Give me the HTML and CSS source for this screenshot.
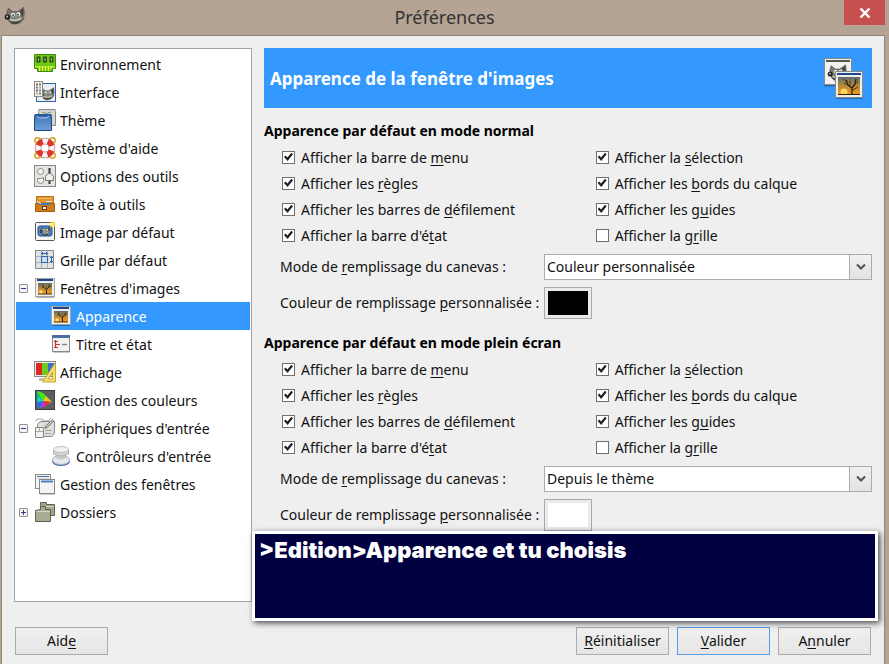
FILE: index.html
```html
<!DOCTYPE html>
<html lang="fr">
<head>
  <meta charset="UTF-8">
  <meta name="viewport" content="width=device-width, initial-scale=1.0">
  <title>Préférences</title>
  <link rel="stylesheet" href="styles.css">
</head>
<body>
  <svg class="defs" aria-hidden="true">
    <defs>
      <linearGradient id="sunset" x1="0" y1="0" x2="0" y2="1">
        <stop offset="0" stop-color="#5c6b70"/>
        <stop offset="0.5" stop-color="#b98a3c"/>
        <stop offset="1" stop-color="#f39a1c"/>
      </linearGradient>
      <linearGradient id="fur" x1="0" y1="0" x2="0" y2="1">
        <stop offset="0" stop-color="#66665f"/>
        <stop offset="0.6" stop-color="#8a8a83"/>
        <stop offset="1" stop-color="#3a3a35"/>
      </linearGradient>
      <linearGradient id="theme-blue" x1="0" y1="0" x2="0" y2="1">
        <stop offset="0" stop-color="#3f76b8"/>
        <stop offset="1" stop-color="#6f9fd4"/>
      </linearGradient>
    </defs>
    <symbol id="wilber" viewBox="0 0 22 20">
      <path d="M3 7 L4.500 2 L9 5.500 H14 L20.500 1 Q22 7 20.500 13 Q17 18.500 11 18.500 Q6 18.500 4 13 Z" fill="url(#fur)" stroke="#3a3a36" stroke-width="0.600"/>
      <path d="M17 5 L20 2.500 Q21 8 19 12 Z" fill="#45453f"/>
      <ellipse cx="9.500" cy="8.500" rx="2" ry="2" fill="#f4f4f0"/>
      <ellipse cx="15" cy="8" rx="2" ry="2" fill="#f4f4f0"/>
      <circle cx="9.500" cy="9" r="0.900" fill="#111"/>
      <circle cx="14.700" cy="8.500" r="0.900" fill="#111"/>
      <circle cx="3.500" cy="11" r="2.800" fill="#1d1d1b"/>
      <circle cx="3.300" cy="10.700" r="1.100" fill="#b5b5b0"/>
      <path d="M6 13.500 Q12 16 18 12.500" fill="none" stroke="#c9c9c2" stroke-width="1.800"/>
    </symbol>
    <symbol id="photo" viewBox="0 0 22 22">
      <path d="M2 20 H20 V21 H3 Z" fill="#000" opacity="0.3"/>
      <rect x="1.500" y="1.500" width="19" height="18" fill="#eeeeec" stroke="#a3a5a0"/>
      <rect x="3" y="2" width="16" height="2" fill="#204a87"/>
      <rect x="4" y="6" width="14" height="11" fill="url(#sunset)"/>
      <circle cx="7" cy="15" r="1.800" fill="#ffe47a"/>
      <path d="M4 17 H18" stroke="#4a3208"/>
      <path d="M12.500 17 V12 M12.500 13 L9.500 10 L8.500 7.500 M12.500 12.500 L15 10 L15.500 7.500" fill="none" stroke="#3a2408" stroke-width="1"/>
      <path d="M15 10 L17 9 M10 10.500 L7.500 10 M13 12 L12.500 9" fill="none" stroke="#3a2408" stroke-width="0.600"/>
    </symbol>
  </svg>

  <header class="titlebar">
    <svg class="app-icon" viewBox="0 0 22 20"><use href="#wilber"/></svg>
    <h1>Préférences</h1>
    <button class="close" type="button" aria-label="Fermer">
      <svg viewBox="0 0 12 10"><path d="M1.500 0.500 L10.500 9.500 M10.500 0.500 L1.500 9.500" stroke="#fff" stroke-width="2.400"/></svg>
    </button>
  </header>

  <form class="dialog">
    <div class="main">
      <nav class="tree" aria-label="Catégories">
        <ul>
          <li><a href="#environnement">
            <svg class="icon" viewBox="0 0 22 22">
              <path d="M0.500 1.500 H21.500 V15.500 H18.500 V18.500 H3.500 V15.500 H0.500 Z" fill="#6cc914" stroke="#3f8a05"/>
              <path d="M1 14 H21" stroke="#9be02a" stroke-width="2"/>
              <path d="M2.500 3.500 h4 v6 h-4 Z M9 3.500 h4 v6 h-4 Z M15.500 3.500 h4 v6 h-4 Z" fill="#2c4a1a"/>
              <path d="M4.500 5 v3 M11 5 v3 M17.500 5 v3" stroke="#a9c59a"/>
              <path d="M5.500 13 v5 M8.500 13 v5 M11.500 13 v5 M14.500 13 v5 M17 13 v3" stroke="#eef04a" stroke-width="1.200"/>
            </svg>
            <span>Environnement</span></a></li>
          <li><a href="#interface">
            <svg class="icon" viewBox="0 0 22 22">
              <rect x="2.500" y="2.500" width="19" height="18" fill="#e9eef4" stroke="#3465a4"/>
              <use href="#wilber" x="5" y="6" width="16" height="14"/>
              <rect x="0.500" y="0.500" width="8" height="15" fill="#f3f3f1" stroke="#888a85"/>
              <path d="M2 3.500 h2 M2 9.500 h2" stroke="#a05a5a" stroke-width="2"/>
              <path d="M5 3.500 h2 M5 12.500 h2" stroke="#5b8f5b" stroke-width="2"/>
              <path d="M2 6.500 h2 M5 9.500 h2" stroke="#6c7fae" stroke-width="2"/>
              <path d="M5 6.500 h2 M2 12.500 h2" stroke="#d09b52" stroke-width="2"/>
            </svg>
            <span>Interface</span></a></li>
          <li><a href="#theme">
            <svg class="icon" viewBox="0 0 22 22">
              <path d="M4.500 2.500 L5 0.500 H21 L21.500 2.500 V16.500 H4.500 Z" fill="#d3d7cf" stroke="#888a85"/>
              <path d="M8 3 q4 3 9 0" fill="none" stroke="#888a85"/>
              <path d="M0.500 7.500 L1 5.500 H17 L17.500 7.500 V21.500 H0.500 Z" fill="url(#theme-blue)" stroke="#204a87"/>
              <path d="M1 6.500 H17" stroke="#2d5c9c" stroke-width="2"/>
              <path d="M3 7 l2 2 h8 l2 -2" fill="none" stroke="#a9c6ea"/>
            </svg>
            <span>Thème</span></a></li>
          <li><a href="#aide">
            <svg class="icon" viewBox="0 0 22 22">
              <circle cx="3.500" cy="3.500" r="2.700" fill="none" stroke="#d9a520" stroke-width="1.500"/>
              <circle cx="18.500" cy="3.500" r="2.700" fill="none" stroke="#d9a520" stroke-width="1.500"/>
              <circle cx="3.500" cy="18.500" r="2.700" fill="none" stroke="#d9a520" stroke-width="1.500"/>
              <circle cx="18.500" cy="18.500" r="2.700" fill="none" stroke="#d9a520" stroke-width="1.500"/>
              <circle cx="11" cy="11" r="7" fill="none" stroke="#b0524c" stroke-width="6.500"/>
              <circle cx="11" cy="11" r="7" fill="none" stroke="#f6f6f6" stroke-width="5.500"/>
              <circle cx="11" cy="11" r="7" fill="none" stroke="#e2352a" stroke-width="5.500" stroke-dasharray="6 5" stroke-dashoffset="8.500"/>
            </svg>
            <span>Système d'aide</span></a></li>
          <li><a href="#options">
            <svg class="icon" viewBox="0 0 22 22">
              <rect x="0.500" y="0.500" width="21" height="21" fill="#e4e4e1" stroke="#888a85"/>
              <circle cx="6.500" cy="6.500" r="3" fill="#f6f6f6" stroke="#888a85"/>
              <path d="M3.500 13.500 h4 l2 -1 v3 a3 3 0 0 1 -6 0 Z" fill="#f6f6f6" stroke="#888a85"/>
              <path d="M15.500 3 V9 M15.500 15 V19" stroke="#2e3436" stroke-width="2"/>
              <path d="M11.500 15.500 V11.500 L14 8.500 H17 L19.500 11.500 V15.500 Z" fill="#eeeeec" stroke="#777974"/>
            </svg>
            <span>Options des outils</span></a></li>
          <li><a href="#boite">
            <svg class="icon" viewBox="0 0 22 22">
              <path d="M2.500 3.500 H19.500 V10 H2.500 Z" fill="#e5922f" stroke="#b57420"/>
              <path d="M1.500 10.500 H20.500 V18.500 H1.500 Z" fill="#cf7b1c" stroke="#a35e0c"/>
              <path d="M4 5.500 H18" stroke="#f7b763"/>
              <path d="M5 11 H16" stroke="#4a76b0" stroke-width="2"/>
              <path d="M3 8.500 l4 2 M12 8.500 h6" stroke="#e8e8e6" stroke-width="1.200"/>
              <rect x="8.500" y="13.500" width="4" height="3" fill="#eeeeec" stroke="#6d3b04"/>
            </svg>
            <span>Boîte à outils</span></a></li>
          <li><a href="#image">
            <svg class="icon" viewBox="0 0 22 22">
              <rect x="1.500" y="1.500" width="19" height="18" rx="1" fill="#f6f6f4" stroke="#555753"/>
              <rect x="4" y="5" width="14" height="10" rx="2" fill="#4f86c6" stroke="#204a87"/>
              <use href="#wilber" x="5" y="5" width="12" height="10"/>
              <circle cx="18.500" cy="3.500" r="3" fill="#fce94f" opacity="0.800"/>
            </svg>
            <span>Image par défaut</span></a></li>
          <li><a href="#grille">
            <svg class="icon" viewBox="0 0 22 22">
              <rect x="1.500" y="1.500" width="18" height="18" fill="#dfe3e6" stroke="#888a85"/>
              <path d="M7.500 2 V19 M13.500 2 V19 M2 7.500 H19 M2 13.500 H19" stroke="#a5b1bd"/>
              <rect x="7.500" y="7.500" width="6" height="6" fill="#d0dcea" stroke="#3465a4"/>
              <path d="M7 4.500 H14 M8.500 3 v3 M12.500 3 v3 M17.500 7 V14 M16 8.500 h3 M16 12.500 h3" stroke="#3465a4"/>
            </svg>
            <span>Grille par défaut</span></a></li>
          <li class="parent">
            <button class="expander" type="button" aria-label="Réduire Fenêtres d'images"></button>
            <a href="#fenetres">
            <svg class="icon" viewBox="0 0 22 22"><use href="#photo"/></svg>
            <span>Fenêtres d'images</span></a>
            <ul>
              <li><a class="selected" href="#apparence" aria-current="page">
                <svg class="icon" viewBox="0 0 22 22"><use href="#photo"/></svg>
                <span>Apparence</span></a></li>
              <li><a href="#titre">
                <svg class="icon" viewBox="0 0 22 22">
                  <path d="M3 19.500 H20" stroke="#000" opacity="0.200"/>
                  <rect x="2.500" y="2.500" width="17" height="16" fill="#f3f3f1" stroke="#888a85"/>
                  <path d="M2 3.500 H20" stroke="#4a6ea3" stroke-width="3"/>
                  <path d="M5.500 7 V15 M4 8.500 h4 M5 11.500 h5 M4 14.500 h4" stroke="#cc3333" stroke-width="1.200"/>
                  <path d="M12 11.500 h5" stroke="#888a85" stroke-width="1.500"/>
                </svg>
                <span>Titre et état</span></a></li>
            </ul>
          </li>
          <li><a href="#affichage">
            <svg class="icon" viewBox="0 0 22 22">
              <rect x="0.500" y="0.500" width="21" height="15" fill="#eeeeec" stroke="#888a85"/>
              <path d="M2 2 h6 v12 h-6 Z" fill="#e0281e"/>
              <path d="M8 2 h6 v12 h-6 Z" fill="#6ecb1f"/>
              <path d="M14 2 h6 v12 h-6 Z" fill="#3b6fd0"/>
              <path d="M5 18.500 H12" stroke="#c0c2be" stroke-width="3"/>
              <path d="M21.500 1.500 V21 H8.500 Z M18.500 11.500 V18 H14 Z" fill="#f3df70" stroke="#c9a82a" fill-rule="evenodd"/>
            </svg>
            <span>Affichage</span></a></li>
          <li><a href="#couleurs">
            <svg class="icon" viewBox="0 0 22 22">
              <rect x="1.500" y="1.500" width="19" height="19" fill="#5c5f61" stroke="#3c3f41"/>
              <path d="M3 2.500 Q8 2 12 7 L18 14 L11 17 L6 19 L3.500 18 Z" fill="#00c878"/>
              <path d="M3 2.500 Q8 2 12 7 L9 12 Z" fill="#4ee01b"/>
              <path d="M12 7 L18 13 L9 12 Z" fill="#f5c61c"/>
              <path d="M18 13 L12 17 L9 12 Z" fill="#ef2a3c"/>
              <path d="M9 12 L12 17 L6 19 Z" fill="#c930d8"/>
              <path d="M9 12 L6 19 L3.500 18 V12 Z" fill="#2a66f0"/>
              <path d="M3.500 8 L9 12 L3.500 13 Z" fill="#16d8d0"/>
            </svg>
            <span>Gestion des couleurs</span></a></li>
          <li class="parent">
            <button class="expander" type="button" aria-label="Réduire Périphériques d'entrée"></button>
            <a href="#peripheriques">
            <svg class="icon" viewBox="0 0 22 22">
              <path d="M1 4 Q5 0 9 3 T17 1" fill="none" stroke="#a0a29e"/>
              <path d="M3.500 7.500 L6 4.500 H20.500 V16 L18 19.500 H3.500 Z" fill="#dededb" stroke="#888a85"/>
              <path d="M1.500 10.500 H9.500 V20.500 H1.500 Z" fill="#f1f1ef" stroke="#888a85"/>
              <path d="M2 14.500 H9 M5.500 11 V14 M11 16.500 H17 M11 13.500 H18" stroke="#a8aaa6"/>
              <path d="M19.500 3 L11 11" stroke="#7b7d79" stroke-width="2.500"/>
              <path d="M19.500 3 L12 10" stroke="#e8e8e6"/>
            </svg>
            <span>Périphériques d'entrée</span></a>
            <ul>
              <li><a href="#controleurs">
                <svg class="icon" viewBox="0 0 22 22">
                  <ellipse cx="11" cy="16.500" rx="9" ry="4.500" fill="#4a70a8"/>
                  <ellipse cx="11" cy="15" rx="8.500" ry="4.500" fill="#e6e8ec" stroke="#a9b2c0"/>
                  <path d="M6 9 V13 Q11 16 16 13 V9 Z" fill="#c6c8c6"/>
                  <path d="M3.500 4.500 V9 Q11 13 18.500 9 V4.500 Z" fill="#d3d5d1" stroke="#b0b2ae"/>
                  <ellipse cx="11" cy="4.500" rx="7.500" ry="3" fill="#f2f2f0" stroke="#c0c2be"/>
                </svg>
                <span>Contrôleurs d'entrée</span></a></li>
            </ul>
          </li>
          <li><a href="#gestion-fenetres">
            <svg class="icon" viewBox="0 0 22 22">
              <rect x="1.500" y="1.500" width="15" height="14" fill="#f3f3f1" stroke="#888a85"/>
              <path d="M3 3.500 H15" stroke="#4a6ea3"/>
              <path d="M3 5.500 H15" stroke="#ccd4de"/>
              <path d="M6 21.500 H21" stroke="#000" opacity="0.200"/>
              <rect x="5.500" y="6.500" width="15" height="14" fill="#f3f3f1" stroke="#888a85"/>
              <path d="M7 8.500 H19" stroke="#4a80c4" stroke-width="2"/>
            </svg>
            <span>Gestion des fenêtres</span></a></li>
          <li class="parent closed">
            <button class="expander" type="button" aria-label="Développer Dossiers"></button>
            <a href="#dossiers">
            <svg class="icon" viewBox="0 0 22 22">
              <path d="M6.500 4.500 V1.500 H12.500 V3.500 H20.500 V14.500 H6.500 Z" fill="#a5a78f" stroke="#5e604e"/>
              <path d="M7 5.500 H20" stroke="#d0d1c3"/>
              <path d="M1.500 9.500 L6.500 8.500 V5.500 H11.500 V8.500 H16.500 V20.500 H1.500 Z" fill="#a9ab94" stroke="#5e604e"/>
              <path d="M2 10.500 H16" stroke="#d5d6ca"/>
            </svg>
            <span>Dossiers</span></a></li>
        </ul>
      </nav>

      <div class="panel">
        <div class="banner">
          <h2>Apparence de la fenêtre d'images</h2>
          <svg class="banner-icon" viewBox="0 0 40 42">
            <path d="M0 28.500 H12" stroke="#000" stroke-width="2" opacity="0.300"/>
            <rect x="0.500" y="1.500" width="27" height="26" fill="#f2f2f0" stroke="#888a85"/>
            <path d="M2 4 H26" stroke="#555753" stroke-width="2"/>
            <use href="#wilber" x="3" y="7" width="20" height="18"/>
            <path d="M12 41 H39" stroke="#000" stroke-width="2" opacity="0.300"/>
            <rect x="11.500" y="14.500" width="27" height="26" fill="#eeeeec" stroke="#888a85"/>
            <path d="M13 17 H37" stroke="#204a87" stroke-width="2"/>
            <rect x="14" y="20" width="22" height="18" fill="url(#sunset)"/>
            <circle cx="20" cy="35" r="3.500" fill="#ffd65c"/>
            <path d="M14 37.500 H36" stroke="#2e2208"/>
            <path d="M28 37 V31 L24 28 L22 23 M28 31 L31 27 L32 22" fill="none" stroke="#2e1c08" stroke-width="1.300"/>
            <path d="M24 28 L20 26 M31 27 L34 25 M26 29 L26 24 M29 33 L34 30 M22 24 L20 22" fill="none" stroke="#2e1c08" stroke-width="0.800"/>
          </svg>
        </div>

        <section>
          <h3>Apparence par défaut en mode normal</h3>
          <div class="checks">
            <label><input type="checkbox" checked><span>Afficher la barre de <u>m</u>enu</span></label>
            <label><input type="checkbox" checked><span>Afficher les <u>r</u>ègles</span></label>
            <label><input type="checkbox" checked><span>Afficher les barres de <u>d</u>éfilement</span></label>
            <label><input type="checkbox" checked><span>Afficher la barre d'é<u>t</u>at</span></label>
            <label><input type="checkbox" checked><span>Afficher la <u>s</u>élection</span></label>
            <label><input type="checkbox" checked><span>Afficher les <u>b</u>ords du calque</span></label>
            <label><input type="checkbox" checked><span>Afficher les g<u>u</u>ides</span></label>
            <label><input type="checkbox"><span>Afficher la g<u>r</u>ille</span></label>
          </div>
          <div class="fields">
            <label for="mode-normal">Mode de <u>r</u>emplissage du canevas :</label>
            <div class="combo">
              <select id="mode-normal">
                <option>Depuis le thème</option>
                <option selected>Couleur personnalisée</option>
              </select>
              <span class="arrow"><svg viewBox="0 0 10 8"><path d="M1 1.500 L5 5.500 L9 1.500" fill="none" stroke="#505050" stroke-width="2"/></svg></span>
            </div>
            <label for="couleur-normal">Couleur de remplissage <u>p</u>ersonnalisée :</label>
            <input type="color" id="couleur-normal" value="#000000">
          </div>
        </section>

        <section>
          <h3>Apparence par défaut en mode plein écran</h3>
          <div class="checks">
            <label><input type="checkbox" checked><span>Afficher la barre de <u>m</u>enu</span></label>
            <label><input type="checkbox" checked><span>Afficher les <u>r</u>ègles</span></label>
            <label><input type="checkbox" checked><span>Afficher les barres de <u>d</u>éfilement</span></label>
            <label><input type="checkbox" checked><span>Afficher la barre d'é<u>t</u>at</span></label>
            <label><input type="checkbox" checked><span>Afficher la <u>s</u>élection</span></label>
            <label><input type="checkbox" checked><span>Afficher les <u>b</u>ords du calque</span></label>
            <label><input type="checkbox" checked><span>Afficher les g<u>u</u>ides</span></label>
            <label><input type="checkbox"><span>Afficher la g<u>r</u>ille</span></label>
          </div>
          <div class="fields">
            <label for="mode-plein">Mode de <u>r</u>emplissage du canevas :</label>
            <div class="combo">
              <select id="mode-plein">
                <option selected>Depuis le thème</option>
                <option>Couleur personnalisée</option>
              </select>
              <span class="arrow"><svg viewBox="0 0 10 8"><path d="M1 1.500 L5 5.500 L9 1.500" fill="none" stroke="#505050" stroke-width="2"/></svg></span>
            </div>
            <label for="couleur-plein">Couleur de remplissage <u>p</u>ersonnalisée :</label>
            <input type="color" id="couleur-plein" value="#ffffff">
          </div>
        </section>
      </div>

      <p class="note">&gt;Edition&gt;Apparence et tu choisis</p>
    </div>

    <footer class="actions">
      <button class="btn help" type="button">Aid<u>e</u></button>
      <button class="btn" type="reset"><u>R</u>éinitialiser</button>
      <button class="btn default" type="button"><u>V</u>alider</button>
      <button class="btn" type="button">A<u>n</u>nuler</button>
    </footer>
  </form>
</body>
</html>
```
FILE: styles.css
```css
* {
  box-sizing: border-box;
}

body {
  margin: 0;
  min-height: 100vh;
  display: flex;
  flex-direction: column;
  background: #b5a493;
  color: #111;
  font-family: "Noto Sans", "Open Sans", sans-serif;
  font-size: 14px;
  line-height: 20px;
}

h1, h2, h3, p, ul {
  margin: 0;
  padding: 0;
}

button, select, input {
  font: inherit;
  color: inherit;
  margin: 0;
}

u {
  text-underline-offset: 2px;
}

.defs {
  position: absolute;
  width: 0;
  height: 0;
}

/* title bar */
.titlebar {
  display: grid;
  grid-template-columns: 1fr auto 1fr;
  height: 35px;
  padding: 0 4px;
}

.app-icon {
  width: 21px;
  height: 20px;
  margin-top: 6px;
}

.titlebar h1 {
  font-size: 18px;
  font-weight: 400;
  line-height: 34px;
  color: #333;
}

.close {
  justify-self: end;
  display: flex;
  justify-content: center;
  align-items: center;
  width: 41px;
  height: 25px;
  padding: 0;
  border: none;
  background: #c75050;
}

.close svg {
  width: 12px;
  height: 10px;
}

/* dialog */
.dialog {
  flex: 1;
  display: flex;
  flex-direction: column;
  gap: 25px;
  margin: 0 4px 0 1px;
  padding: 12px 12px 9px;
  background: #efefef;
  border: 1px solid #92867b;
  border-bottom: none;
}

.main {
  position: relative;
  flex: 1;
  display: flex;
  gap: 12px;
}

.tree {
  flex: 0 0 238px;
  padding: 1px;
  background: #fff;
  border: 1px solid #a3a5ab;
}

.tree ul {
  list-style: none;
}

.tree a {
  display: flex;
  align-items: center;
  gap: 4px;
  height: 28px;
  padding-left: 18px;
  color: inherit;
  text-decoration: none;
}

.tree span,
.checks span,
.banner h2 {
  padding-top: 2px;
}

.tree ul ul a {
  padding-left: 34px;
}

.tree a.selected {
  background: #3399ff;
  color: #fff;
}

.icon {
  flex: none;
  width: 22px;
  height: 22px;
}

.parent {
  position: relative;
}

.expander {
  position: absolute;
  left: 3px;
  top: 10px;
  width: 9px;
  height: 9px;
  padding: 0;
  border: 1px solid #919191;
  border-radius: 1px;
  background: linear-gradient(#2b3f8c, #2b3f8c) center / 5px 1px no-repeat, #f4f4f4;
}

.closed .expander {
  background: linear-gradient(#2b3f8c, #2b3f8c) center / 5px 1px no-repeat,
    linear-gradient(#2b3f8c, #2b3f8c) center / 1px 5px no-repeat, #f4f4f4;
}

/* right side */
.panel {
  flex: 1;
  min-width: 0;
}

.banner {
  display: flex;
  justify-content: space-between;
  align-items: center;
  height: 60px;
  padding: 0 8px 0 6px;
  margin-bottom: 10px;
  background: #3399ff;
  color: #fff;
}

.banner h2 {
  font-size: 17px;
  font-weight: 700;
}

.banner-icon {
  width: 40px;
  height: 42px;
}

section {
  margin-bottom: 11px;
}

h3 {
  font-size: 14px;
  font-weight: 700;
  line-height: 26px;
  color: #000;
}

.checks {
  display: grid;
  grid-template-columns: 53fr 47fr;
  grid-template-rows: repeat(4, 26px);
  grid-auto-flow: column;
  column-gap: 2px;
  align-items: center;
  padding-left: 18px;
  margin-bottom: 6px;
}

.checks label {
  display: flex;
  align-items: center;
  gap: 6px;
}

input[type="checkbox"] {
  appearance: none;
  display: grid;
  place-items: center;
  width: 13px;
  height: 13px;
  border: 1px solid #707070;
  background: #fff;
}

input[type="checkbox"]:checked::before {
  content: "";
  width: 9px;
  height: 9px;
  background: #212121;
  clip-path: polygon(0 50%, 18% 34%, 38% 56%, 82% 4%, 100% 20%, 40% 94%);
}

.fields {
  display: grid;
  grid-template-columns: 258px 1fr;
  gap: 7px 6px;
  align-items: center;
  padding-left: 16px;
  white-space: nowrap;
}

.combo {
  position: relative;
}

.combo select {
  appearance: none;
  display: block;
  width: 100%;
  height: 26px;
  padding: 0 26px 0 2px;
  border: 1px solid #ababab;
  border-radius: 0;
  background: #fff;
}

.arrow {
  position: absolute;
  top: 0;
  right: 0;
  display: flex;
  justify-content: center;
  align-items: center;
  width: 23px;
  height: 26px;
  border: 1px solid #ababab;
  background: linear-gradient(#f0f0f0, #e3e3e3);
  pointer-events: none;
}

.arrow svg {
  width: 10px;
  height: 8px;
}

input[type="color"] {
  appearance: none;
  width: 48px;
  height: 32px;
  padding: 3px;
  border: 1px solid #ababab;
  border-radius: 0;
  background: #ebebeb;
}

input[type="color"]::-webkit-color-swatch-wrapper {
  padding: 0;
}

input[type="color"]::-webkit-color-swatch {
  border: none;
  border-radius: 0;
}

/* note laid over the bottom of the panel */
.note {
  position: absolute;
  left: 238px;
  right: -6px;
  bottom: -19px;
  height: 90px;
  padding: 4px 4px;
  border: 3px solid #fff;
  background: #000040;
  box-shadow: 2px 2px 6px rgba(0, 0, 0, 0.7);
  color: #fff;
  font-family: Inter, "Open Sans", sans-serif;
  font-size: 22px;
  font-weight: 900;
  line-height: 24px;
}

/* buttons */
.actions {
  display: flex;
  gap: 8px;
  padding: 0 1px;
}

.btn {
  width: 93px;
  height: 28px;
  padding: 0;
  border: 1px solid #acacac;
  border-radius: 0;
  background: linear-gradient(#f0f0f0, #e5e5e5);
}

.btn.default {
  border-color: #569de5;
}

.help {
  margin-right: auto;
}
```
